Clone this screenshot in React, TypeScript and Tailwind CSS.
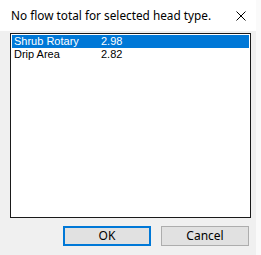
import React from "react";

const rows = [
  { name: "Shrub Rotary", flow: "2.98" },
  { name: "Drip Area", flow: "2.82" },
];

export default function App() {
  const ui = { fontFamily: '"Noto Sans", "Open Sans", sans-serif' };
  const list = { fontFamily: '"Liberation Sans", Arial, sans-serif' };

  return (
    <div className="flex h-[255px] w-[261px] bg-white">
      <div className="flex w-[256px] flex-col">
        {/* title bar */}
        <div className="relative flex h-[31px] items-start bg-white pl-[11px] pt-[7px]">
          <span className="text-[11.8px] leading-[16px] text-black" style={ui}>
            No flow total for selected head type.
          </span>
          <svg
            className="absolute left-[236px] top-[11px]"
            width="10"
            height="10"
            viewBox="0 0 10 10"
          >
            <path d="M0.5 0.5 L9.5 9.5 M9.5 0.5 L0.5 9.5" stroke="#000" strokeWidth="1" />
          </svg>
        </div>

        {/* body */}
        <div className="flex flex-1 flex-col bg-[#f0f0f0] pl-[10px] pt-[2px]">
          <div className="h-[185px] w-[241px] border border-[#1a1a1a] bg-white p-[1px]">
            {rows.map((r, i) => (
              <div
                key={r.name}
                className={`flex h-[13px] items-center text-[11px] leading-[13px] ${
                  i === 0 ? "bg-[#0078d7] text-white" : "text-black"
                }`}
                style={list}
              >
                <span className="w-[89px] pl-[2px]">{r.name}</span>
                <span>{r.flow}</span>
              </div>
            ))}
          </div>

          <div className="mt-[8px] flex gap-[10px] pl-[53px]">
            <button
              className="h-[20px] w-[88px] border-2 border-[#0078d7] bg-[#e1e1e1] text-[12px] leading-[16px] text-black"
              style={ui}
            >
              OK
            </button>
            <button
              className="h-[20px] w-[88px] border border-[#adadad] bg-[#e1e1e1] text-[12px] leading-[16px] text-black"
              style={ui}
            >
              Cancel
            </button>
          </div>
        </div>
      </div>
      <div className="flex-1 bg-[#fafafa]" />
    </div>
  );
}
